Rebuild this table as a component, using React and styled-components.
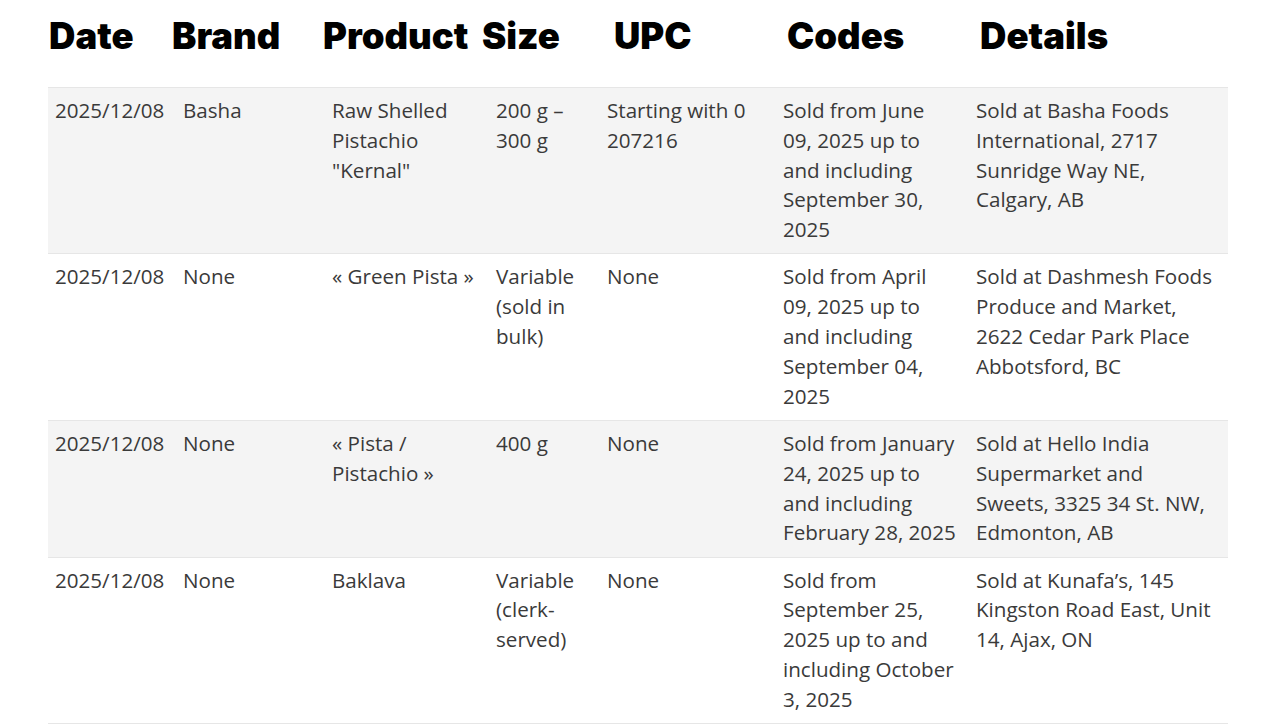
import React from "react";
import styled, { createGlobalStyle } from "styled-components";

const GlobalStyle = createGlobalStyle`
  html, body {
    margin: 0;
    padding: 0;
    background: #ffffff;
  }
`;

const Page = styled.div`
  padding: 0 52px 0 48px;
`;

const HeaderRow = styled.div`
  display: grid;
  grid-template-columns: 123px 151px 159px 132px 173px 193px auto;
  height: 87px;
  align-items: start;
  padding-top: 14px;
  box-sizing: border-box;
`;

const HeaderCell = styled.div`
  font-family: "Inter", "Liberation Sans", sans-serif;
  font-weight: 900;
  font-size: 36.5px;
  line-height: 44px;
  color: #000;
  padding-left: 1px;
  white-space: nowrap;
`;

const Table = styled.table`
  width: 100%;
  border-collapse: collapse;
  table-layout: fixed;
  font-family: "Open Sans", "Noto Sans", sans-serif;
  font-size: 20.6px;
  line-height: 29.8px;
  color: #3a3a3a;
`;

const Row = styled.tr`
  background: ${(p) => (p.$shaded ? "#f4f4f4" : "#ffffff")};
  border-top: 1px solid #e6e6e6;
  border-bottom: 1px solid #e6e6e6;
`;

const Cell = styled.td`
  vertical-align: top;
  padding: 8px 11.5px 8.5px 7px;
`;

const columns = [128, 149, 164, 111, 176, 193, 259];

const headers = ["Date", "Brand", "Product", "Size", "UPC", "Codes", "Details"];

const recalls = [
  {
    date: "2025/12/08",
    brand: "Basha",
    product: 'Raw Shelled Pistachio "Kernal"',
    size: "200 g – 300 g",
    upc: "Starting with 0 207216",
    codes: "Sold from June 09, 2025 up to and including September 30, 2025",
    details: "Sold at Basha Foods International, 2717 Sunridge Way NE, Calgary, AB",
  },
  {
    date: "2025/12/08",
    brand: "None",
    product: "« Green Pista »",
    size: "Variable (sold in bulk)",
    upc: "None",
    codes: "Sold from April 09, 2025 up to and including September 04, 2025",
    details:
      "Sold at Dashmesh Foods Produce and Market, 2622 Cedar Park Place Abbotsford, BC",
  },
  {
    date: "2025/12/08",
    brand: "None",
    product: "« Pista / Pistachio »",
    size: "400 g",
    upc: "None",
    codes: "Sold from January 24, 2025 up to and including February 28, 2025",
    details: "Sold at Hello India Supermarket and Sweets, 3325 34 St. NW, Edmonton, AB",
  },
  {
    date: "2025/12/08",
    brand: "None",
    product: "Baklava",
    size: "Variable (clerk-served)",
    upc: "None",
    codes: "Sold from September 25, 2025 up to and including October 3, 2025",
    details: "Sold at Kunafa’s, 145 Kingston Road East, Unit 14, Ajax, ON",
  },
];

function App() {
  return (
    <Page>
      <GlobalStyle />
      <HeaderRow>
        {headers.map((label) => (
          <HeaderCell key={label}>{label}</HeaderCell>
        ))}
      </HeaderRow>
      <Table>
        <colgroup>
          {columns.map((w, i) => (
            <col key={i} style={{ width: w }} />
          ))}
        </colgroup>
        <tbody>
          {recalls.map((r, index) => (
            <Row key={index} $shaded={index % 2 === 0}>
              <Cell>{r.date}</Cell>
              <Cell>{r.brand}</Cell>
              <Cell>{r.product}</Cell>
              <Cell>{r.size}</Cell>
              <Cell>{r.upc}</Cell>
              <Cell>{r.codes}</Cell>
              <Cell>{r.details}</Cell>
            </Row>
          ))}
        </tbody>
      </Table>
    </Page>
  );
}

export default App;
